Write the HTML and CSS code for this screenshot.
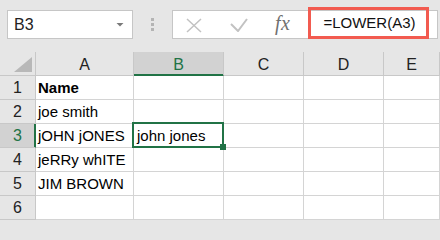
FILE: index.html
```html
<!DOCTYPE html>
<html>
<head>
<meta charset="utf-8">
<link rel="stylesheet" href="styles.css">
</head>
<body>
<div class="app">
  <div class="toolbar">
    <div class="namebox">
      <span class="ref">B3</span>
      <svg class="drop" width="8" height="4" viewBox="0 0 8 4"><polygon points="0.5,0 7.5,0 4,3.5" fill="#7a7a7a"/></svg>
    </div>
    <div class="grip">
      <svg width="4" height="14" viewBox="0 0 4 14"><rect x="0" y="0" width="3" height="3" fill="#b4b4b4"/><rect x="0" y="5" width="3" height="3" fill="#b4b4b4"/><rect x="0" y="10" width="3" height="3" fill="#b4b4b4"/></svg>
    </div>
    <div class="formula">
      <svg class="icon-x" width="16" height="15" viewBox="0 0 16 15"><path d="M1 1 L15 14 M15 1 L1 14" stroke="#c2c2c2" stroke-width="1.5" fill="none"/></svg>
      <svg class="icon-check" width="18" height="14" viewBox="0 0 18 14"><path d="M1 6 L8 13 L17 1" stroke="#c2c2c2" stroke-width="2" fill="none"/></svg>
      <span class="fx">fx</span>
      <div class="input">=LOWER(A3)</div>
    </div>
  </div>
  <div class="sheet">
    <div class="corner"><svg width="18" height="15" viewBox="0 0 18 15"><polygon points="0,15 18,15 18,0" fill="#b8b8b8"/></svg></div>
    <div class="ch">A</div>
    <div class="ch sel">B</div>
    <div class="ch">C</div>
    <div class="ch">D</div>
    <div class="ch">E</div>

    <div class="rh">1</div>
    <div class="c bold">Name</div>
    <div class="c"></div><div class="c"></div><div class="c"></div><div class="c"></div>

    <div class="rh">2</div>
    <div class="c">joe smith</div>
    <div class="c"></div><div class="c"></div><div class="c"></div><div class="c"></div>

    <div class="rh sel">3</div>
    <div class="c">jOHN jONES</div>
    <div class="c active">john jones</div>
    <div class="c"></div><div class="c"></div><div class="c"></div>

    <div class="rh">4</div>
    <div class="c">jeRRy whITE</div>
    <div class="c"></div><div class="c"></div><div class="c"></div><div class="c"></div>

    <div class="rh">5</div>
    <div class="c">JIM BROWN</div>
    <div class="c"></div><div class="c"></div><div class="c"></div><div class="c"></div>

    <div class="rh">6</div>
    <div class="c"></div>
    <div class="c"></div><div class="c"></div><div class="c"></div><div class="c"></div>
  </div>
</div>
</body>
</html>
```
FILE: styles.css
```css
html, body {
  margin: 0;
  padding: 0;
}
body {
  width: 440px;
  height: 220px;
  overflow: hidden;
  background: #e6e6e6;
  font-family: "Liberation Sans", Arial, sans-serif;
  color: #000;
}
.app {
  width: 440px;
  height: 220px;
  display: flex;
  flex-direction: column;
}
.toolbar {
  height: 52px;
  box-sizing: border-box;
  padding: 10px 2px 0 7px;
  display: flex;
  align-items: flex-start;
}
.namebox {
  width: 126px;
  height: 29px;
  box-sizing: border-box;
  border: 1px solid #c6c6c6;
  background: #fff;
  display: flex;
  align-items: center;
  padding: 0 8px 0 6px;
}
.ref {
  flex: 1;
  font-size: 16px;
  color: #222;
}
.drop {
  display: block;
}
.grip {
  width: 39px;
  height: 29px;
  display: flex;
  justify-content: center;
  padding-left: 1px;
  box-sizing: border-box;
  padding-top: 8px;
}
.grip svg {
  display: block;
}
.formula {
  flex: 1;
  height: 29px;
  box-sizing: border-box;
  border: 1px solid #c6c6c6;
  background: #fff;
  display: flex;
  align-items: center;
}
.icon-x {
  margin-left: 13px;
  margin-top: 1px;
  display: block;
}
.icon-check {
  margin-left: 28px;
  display: block;
}
.fx {
  margin-left: 27px;
  font-family: "Liberation Serif", "Times New Roman", serif;
  font-style: italic;
  font-size: 20px;
  color: #707070;
  margin-top: -2px;
  letter-spacing: 0.5px;
}
.input {
  align-self: flex-start;
  margin-top: -4px;
  margin-left: 18px;
  width: 121px;
  height: 32px;
  box-sizing: border-box;
  border: 3px solid #f25b50;
  padding-left: 12px;
  font-size: 15px;
  line-height: 26px;
  color: #111;
  white-space: nowrap;
}
.sheet {
  flex: 1;
  display: grid;
  grid-template-columns: 36px 98px 90px 80px 80px 1fr;
  grid-auto-rows: 24px;
  background: #fff;
}
.corner, .ch, .rh {
  background: #e6e6e6;
  border-right: 1px solid #c8c8c8;
  border-bottom: 1px solid #c8c8c8;
  box-sizing: border-box;
}
.corner {
  display: flex;
  align-items: flex-end;
  justify-content: flex-end;
  padding: 0 3px 3px 0;
}
.corner svg {
  display: block;
}
.ch {
  text-align: center;
  font-size: 16px;
  line-height: 20px;
  padding-top: 3px;
  color: #222;
}
.ch.sel {
  background: #d2d2d2;
  color: #217346;
  border-bottom-color: #217346;
  box-shadow: inset 0 -1px 0 #217346;
}
.rh {
  text-align: center;
  font-size: 16px;
  line-height: 20px;
  padding-top: 2px;
  color: #222;
}
.rh.sel {
  background: #d2d2d2;
  color: #217346;
  border-right-color: #217346;
  box-shadow: inset -1px 0 0 #217346;
}
.c {
  border-right: 1px solid #d4d4d4;
  border-bottom: 1px solid #d4d4d4;
  box-sizing: border-box;
  font-size: 15px;
  line-height: 20px;
  padding: 2px 0 0 2px;
  white-space: nowrap;
}
.bold {
  font-weight: bold;
}
.active {
  position: relative;
  padding-left: 3px;
}
.active::after {
  content: "";
  position: absolute;
  top: -2px;
  left: -2px;
  right: -1px;
  bottom: -1px;
  border: 2px solid #217346;
}
.active::before {
  content: "";
  position: absolute;
  right: -3px;
  bottom: -3px;
  width: 6px;
  height: 6px;
  background: #217346;
  z-index: 1;
}
```
